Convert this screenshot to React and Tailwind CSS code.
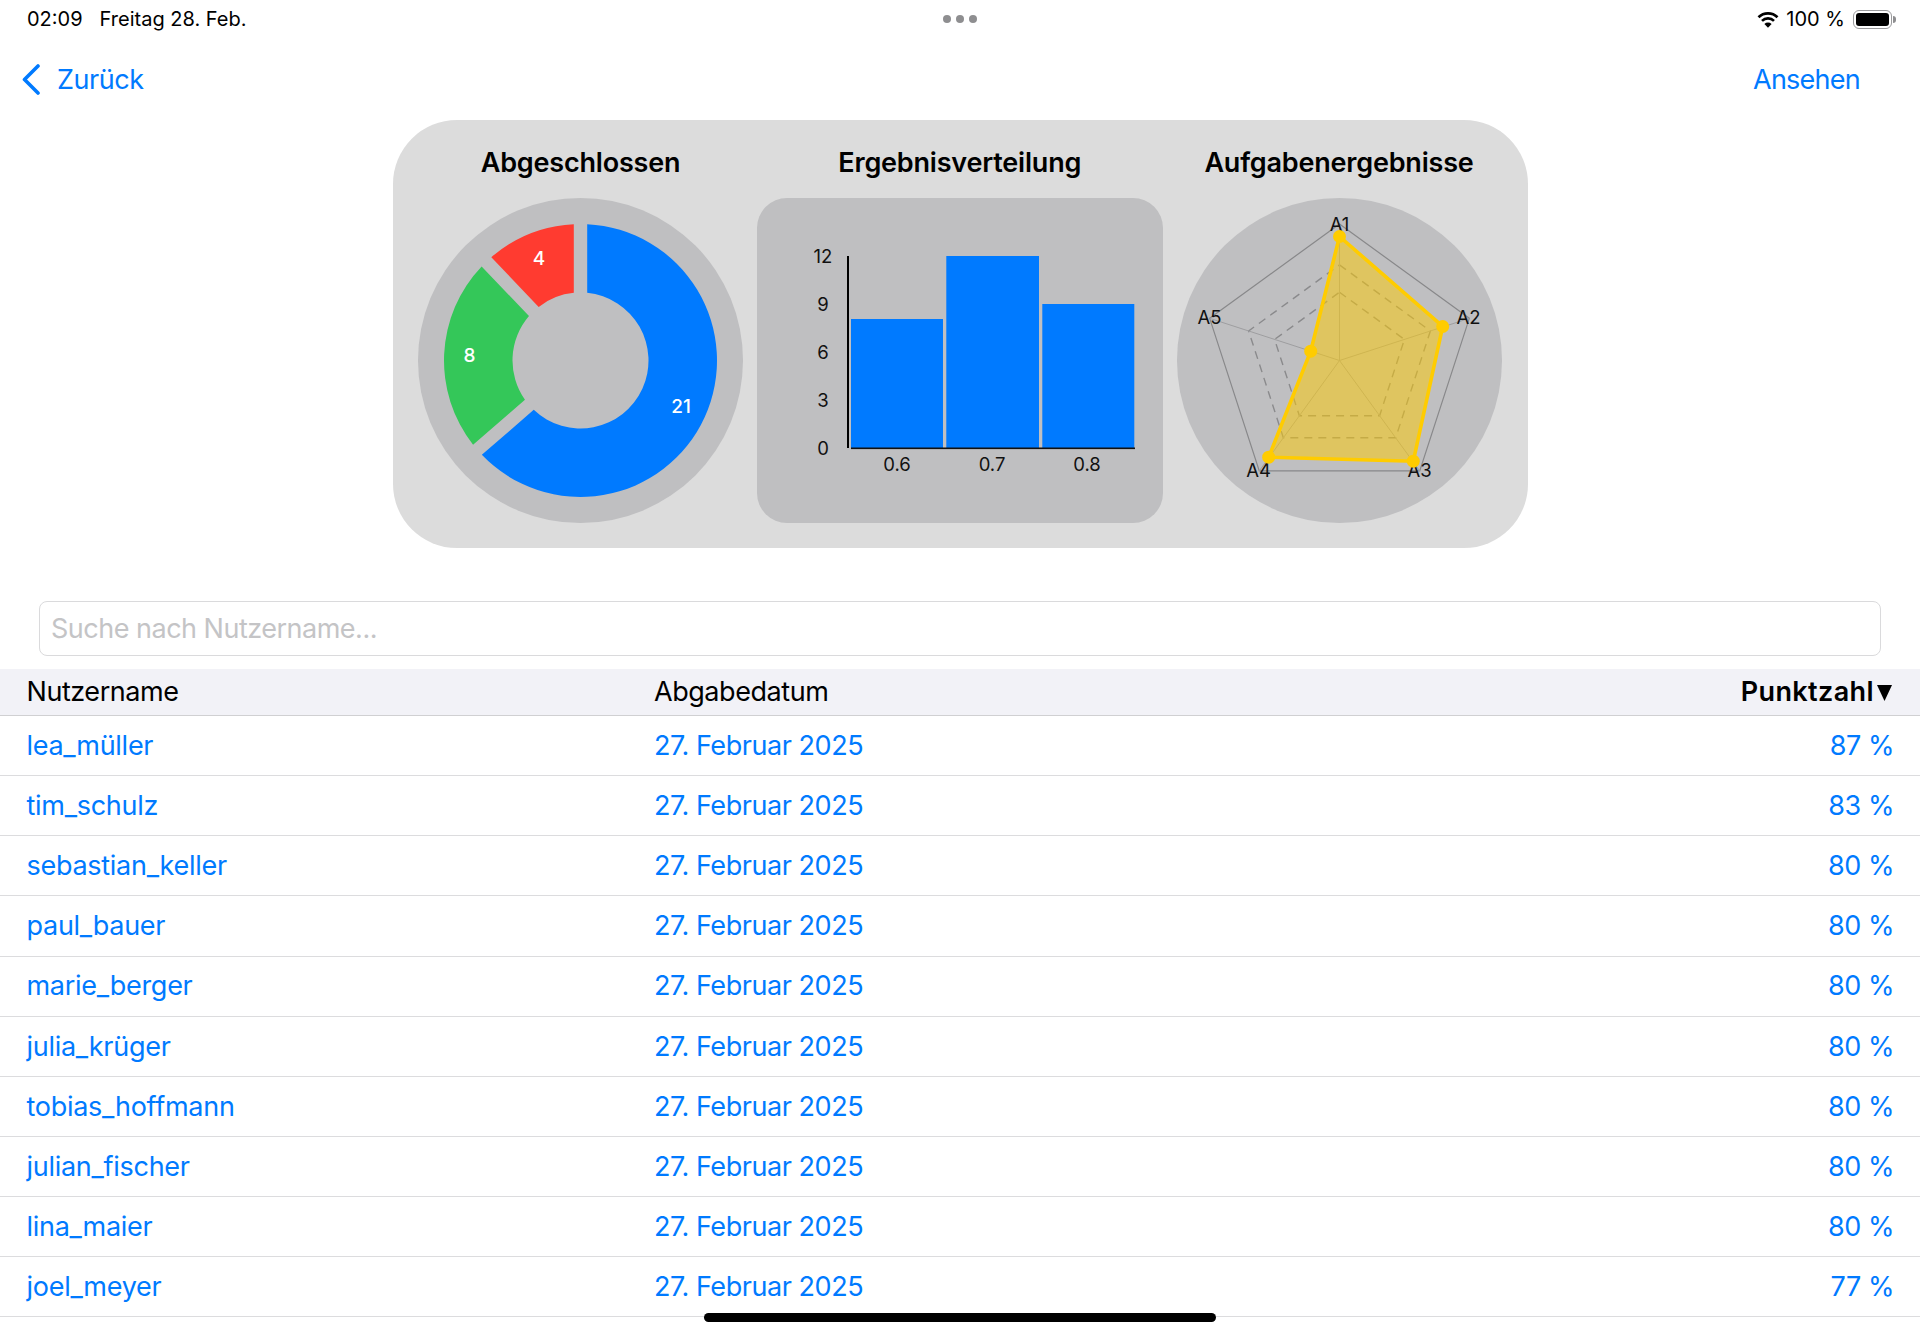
import React from 'react';

const rows = [
  ['lea_müller', '87 %'],
  ['tim_schulz', '83 %'],
  ['sebastian_keller', '80 %'],
  ['paul_bauer', '80 %'],
  ['marie_berger', '80 %'],
  ['julia_krüger', '80 %'],
  ['tobias_hoffmann', '80 %'],
  ['julian_fischer', '80 %'],
  ['lina_maier', '80 %'],
  ['joel_meyer', '77 %'],
];

// donut segment with parallel gaps, angles in degrees clockwise from top
const polar = (cx, cy, r, a) => [cx + r * Math.sin(a), cy - r * Math.cos(a)];
const segment = (start, end, R, r, gap) => {
  const toRad = Math.PI / 180;
  const a0 = start * toRad;
  const a1 = end * toRad;
  const dO = Math.asin(gap / R);
  const dI = Math.asin(gap / r);
  const c = 162.5;
  const p1 = polar(c, c, R, a0 + dO);
  const p2 = polar(c, c, R, a1 - dO);
  const p3 = polar(c, c, r, a1 - dI);
  const p4 = polar(c, c, r, a0 + dI);
  const large = end - start > 180 ? 1 : 0;
  return `M${p1[0]} ${p1[1]}A${R} ${R} 0 ${large} 1 ${p2[0]} ${p2[1]}L${p3[0]} ${p3[1]}A${r} ${r} 0 ${large} 0 ${p4[0]} ${p4[1]}Z`;
};

function Donut() {
  return (
    <svg viewBox="0 0 325 325" className="h-[325px] w-[325px]">
      <circle cx="162.5" cy="162.5" r="162.5" fill="#bfbfc1" />
      <path d={segment(0, 229.1, 136.5, 68, 6.7)} fill="#007aff" />
      <path d={segment(229.1, 316.4, 136.5, 68, 6.7)} fill="#34c759" />
      <path d={segment(316.4, 360, 136.5, 68, 6.7)} fill="#ff3b30" />
      <g fill="#fff" fontSize="19" fontWeight="500" textAnchor="middle" dominantBaseline="central">
        <text x="121" y="60">4</text>
        <text x="51.5" y="157">8</text>
        <text x="263" y="208">21</text>
      </g>
    </svg>
  );
}

function Bars() {
  const bars = [
    { x: 94, w: 92, top: 121, label: '0.6', cx: 140 },
    { x: 189.3, w: 92.7, top: 58, label: '0.7', cx: 235 },
    { x: 285.3, w: 92, top: 106, label: '0.8', cx: 330 },
  ];
  return (
    <svg viewBox="0 0 406 325" className="h-full w-full">
      {bars.map((b) => (
        <rect key={b.label} x={b.x} y={b.top} width={b.w} height={250 - b.top} fill="#007aff" />
      ))}
      <rect x="90" y="58" width="2" height="192" fill="#000" />
      <rect x="94" y="249.5" width="284" height="1.6" fill="#111" />
      <g fontSize="18.5" fill="#111" textAnchor="middle" dominantBaseline="central">
        <text x="66" y="57.5">12</text>
        <text x="66" y="105.5">9</text>
        <text x="66" y="153.5">6</text>
        <text x="66" y="201.5">3</text>
        <text x="66" y="249.5">0</text>
        {bars.map((b) => (
          <text key={b.label} x={b.cx} y="265.5">{b.label}</text>
        ))}
      </g>
    </svg>
  );
}

const pent = (k) =>
  [0, 72, 144, 216, 288]
    .map((d) => polar(162.5, 162.5, 136.5 * k, (d * Math.PI) / 180).join(','))
    .join(' ');

function Radar() {
  const pts = [
    [162.5, 38.5],
    [265.7, 128.5],
    [236.3, 263.2],
    [91.7, 259.2],
    [133.7, 153.2],
  ];
  const labels = [
    ['A1', 162.5, 25.5],
    ['A2', 291.5, 118.5],
    ['A3', 242.5, 271.5],
    ['A4', 81.5, 271.5],
    ['A5', 32.5, 118.5],
  ];
  return (
    <svg viewBox="0 0 325 325" className="h-[325px] w-[325px]">
      <circle cx="162.5" cy="162.5" r="162.5" fill="#bfbfc1" />
      <polygon points={pent(1)} fill="none" stroke="#88888a" strokeWidth="1.2" />
      <polygon points={pent(0.7)} fill="none" stroke="#8a8a8c" strokeWidth="1.4" strokeDasharray="8 6" />
      <polygon points={pent(0.5)} fill="none" stroke="#8a8a8c" strokeWidth="1.4" strokeDasharray="8 6" />
      {[0, 72, 144, 216, 288].map((d) => {
        const p = polar(162.5, 162.5, 136.5, (d * Math.PI) / 180);
        return <line key={d} x1="162.5" y1="162.5" x2={p[0]} y2={p[1]} stroke="#9e9ea0" strokeWidth="1" />;
      })}
      <g fontSize="18.5" fill="#111" textAnchor="middle" dominantBaseline="central">
        {labels.map(([t, x, y]) => (
          <text key={t} x={x} y={y}>{t}</text>
        ))}
      </g>
      <polygon
        points={pts.map((p) => p.join(',')).join(' ')}
        fill="#ffcc00"
        fillOpacity="0.5"
        stroke="#ffcc00"
        strokeWidth="3.6"
      />
      {pts.map((p) => (
        <circle key={p[0]} cx={p[0]} cy={p[1]} r="6.5" fill="#ffcc00" />
      ))}
    </svg>
  );
}

function StatusBar() {
  return (
    <div className="grid h-[38px] grid-cols-3 items-center px-[27px] text-[20px] text-black">
      <div className="flex gap-[17px]">
        <span>02:09</span>
        <span>Freitag 28. Feb.</span>
      </div>
      <div className="flex justify-center gap-[5px]">
        <span className="h-[8px] w-[8px] rounded-full bg-[#8e8e90]" />
        <span className="h-[8px] w-[8px] rounded-full bg-[#8e8e90]" />
        <span className="h-[8px] w-[8px] rounded-full bg-[#8e8e90]" />
      </div>
      <div className="-mr-[3px] flex items-center justify-end gap-[8px]">
        <svg viewBox="0 0 22 17" className="-mr-[1px] h-[17px] w-[22px]">
          <path d="M1.5 6.2a13.6 13.6 0 0 1 19 0" fill="none" stroke="#000" strokeWidth="2.7" />
          <path d="M5 9.9a8.6 8.6 0 0 1 12 0" fill="none" stroke="#000" strokeWidth="2.7" />
          <path d="M7.4 13.1a5.1 5.1 0 0 1 7.2 0L11 16.8z" />
        </svg>
        <span>100 %</span>
        <div className="flex items-center gap-[1px]">
          <div className="h-[19px] w-[39px] rounded-[6px] border-[1.5px] border-[#9a9a9c] p-[2px]">
            <div className="h-full w-full rounded-[3px] bg-black" />
          </div>
          <div className="h-[7px] w-[3px] rounded-r-full bg-[#8e8e90]" />
        </div>
      </div>
    </div>
  );
}

function ChartColumn({ title, children }) {
  return (
    <div className="flex flex-col items-center">
      <h2 className="flex h-[78px] items-center pt-[7px] text-[27px] font-semibold leading-none tracking-[-0.2px] text-black">{title}</h2>
      {children}
    </div>
  );
}

export default function App() {
  return (
    <div className="relative h-[1334px] w-[1920px] overflow-hidden bg-white font-['Inter',sans-serif]">
      <StatusBar />
      <div className="flex h-[82px] items-center justify-between pl-[22px] pr-[60px] text-[27px] tracking-[-0.45px] text-[#007aff]">
        <div className="flex items-center gap-[17px]">
          <svg viewBox="0 0 18 31" className="h-[31px] w-[18px]">
            <path d="M16 2 2.5 15.5 16 29" fill="none" stroke="#007aff" strokeWidth="3.6" strokeLinecap="round" strokeLinejoin="round" />
          </svg>
          <span className="pt-[3px]">Zurück</span>
        </div>
        <span className="pt-[3px] tracking-[-0.75px]">Ansehen</span>
      </div>

      <div className="mx-auto flex h-[428px] w-[1135px] justify-between rounded-[64px] bg-[#dcdcdc] pl-[25.5px] pr-[26px]">
        <ChartColumn title="Abgeschlossen">
          <Donut />
        </ChartColumn>
        <ChartColumn title="Ergebnisverteilung">
          <div className="h-[325px] w-[406px] rounded-[30px] bg-[#bfbfc1]">
            <Bars />
          </div>
        </ChartColumn>
        <ChartColumn title="Aufgabenergebnisse">
          <Radar />
        </ChartColumn>
      </div>

      <div className="mx-[39px] mt-[53px] flex h-[55px] items-center rounded-[8px] border-[1.5px] border-[#dadadc] px-[11px] pt-[2px] text-[27px] tracking-[-0.5px] text-[#c4c4c6]">
        Suche nach Nutzername...
      </div>

      <div className="mt-[13px] grid h-[47px] grid-cols-[627px_1fr_auto] items-center border-b-[1.5px] border-[#d0d0d2] bg-[#f2f2f7] pl-[26.5px] pr-[28px] pt-[1px] text-[27px] tracking-[-0.45px] text-black">
        <span>Nutzername</span>
        <span className="pl-[0.5px]">Abgabedatum</span>
        <span className="flex items-center gap-[3px] font-semibold tracking-[0.4px]">
          Punktzahl
          <svg viewBox="0 0 15 16" className="h-[16px] w-[15px]">
            <path d="M0 0h15L7.5 16z" />
          </svg>
        </span>
      </div>

      {rows.map(([name, score]) => (
        <div
          key={name}
          className="grid h-[60.15px] grid-cols-[627px_1fr_auto] items-center border-b-[1.5px] border-[#dcdcde] pl-[26.5px] pr-[26px] pt-[1px] text-[27px] tracking-[-0.45px] text-[#007aff]"
        >
          <span className="tracking-[-0.28px]">{name}</span>
          <span className="pl-[0.5px]">27. Februar 2025</span>
          <span>{score}</span>
        </div>
      ))}

      <div className="absolute left-[704px] top-[1313px] h-[9px] w-[512px] rounded-full bg-black" />
    </div>
  );
}
